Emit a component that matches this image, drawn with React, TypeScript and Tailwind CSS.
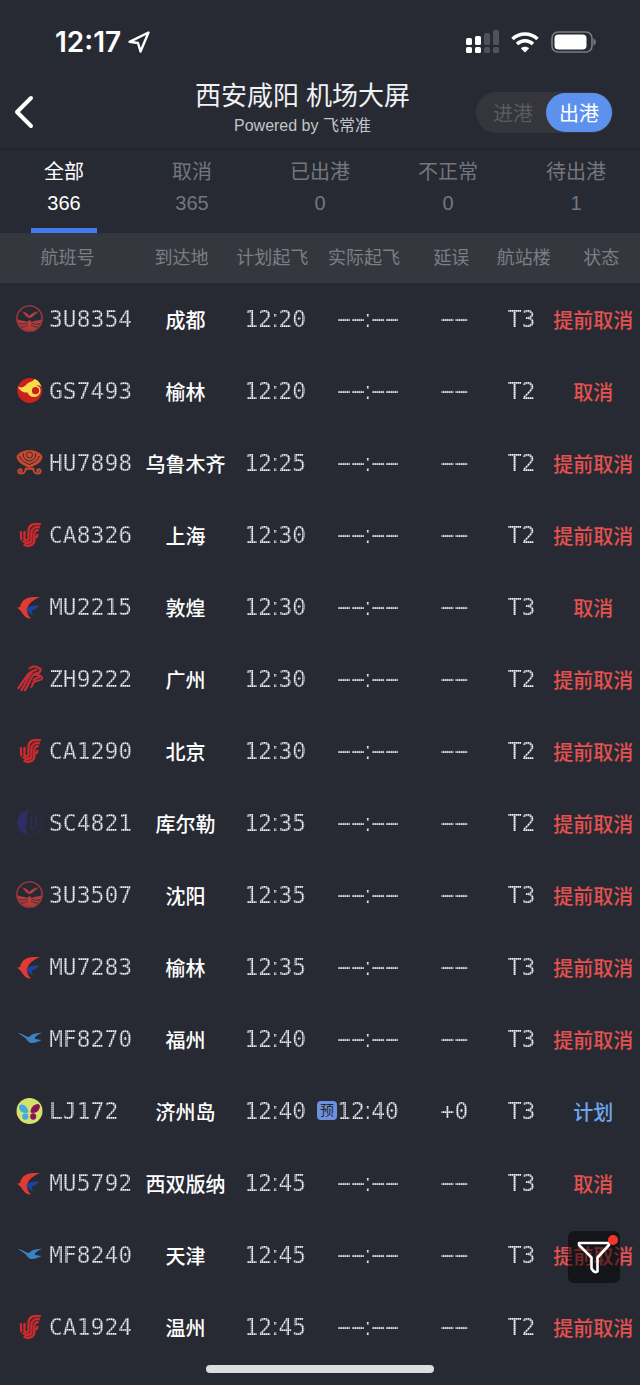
import { useState } from 'react';
import type { ReactNode } from 'react';

type Airline = '3U' | 'GS' | 'HU' | 'CA' | 'MU' | 'ZH' | 'SC' | 'MF' | 'LJ';

interface Flight {
  airline: Airline;
  number: string;
  city: string;
  planned: string;
  actual?: string;
  delay?: string;
  terminal: string;
  status: string;
}

const flights: Flight[] = [
  { airline: '3U', number: '3U8354', city: '成都', planned: '12:20', terminal: 'T3', status: '提前取消' },
  { airline: 'GS', number: 'GS7493', city: '榆林', planned: '12:20', terminal: 'T2', status: '取消' },
  { airline: 'HU', number: 'HU7898', city: '乌鲁木齐', planned: '12:25', terminal: 'T2', status: '提前取消' },
  { airline: 'CA', number: 'CA8326', city: '上海', planned: '12:30', terminal: 'T2', status: '提前取消' },
  { airline: 'MU', number: 'MU2215', city: '敦煌', planned: '12:30', terminal: 'T3', status: '取消' },
  { airline: 'ZH', number: 'ZH9222', city: '广州', planned: '12:30', terminal: 'T2', status: '提前取消' },
  { airline: 'CA', number: 'CA1290', city: '北京', planned: '12:30', terminal: 'T2', status: '提前取消' },
  { airline: 'SC', number: 'SC4821', city: '库尔勒', planned: '12:35', terminal: 'T2', status: '提前取消' },
  { airline: '3U', number: '3U3507', city: '沈阳', planned: '12:35', terminal: 'T3', status: '提前取消' },
  { airline: 'MU', number: 'MU7283', city: '榆林', planned: '12:35', terminal: 'T3', status: '提前取消' },
  { airline: 'MF', number: 'MF8270', city: '福州', planned: '12:40', terminal: 'T3', status: '提前取消' },
  { airline: 'LJ', number: 'LJ172', city: '济州岛', planned: '12:40', actual: '12:40', delay: '+0', terminal: 'T3', status: '计划' },
  { airline: 'MU', number: 'MU5792', city: '西双版纳', planned: '12:45', terminal: 'T3', status: '取消' },
  { airline: 'MF', number: 'MF8240', city: '天津', planned: '12:45', terminal: 'T3', status: '提前取消' },
  { airline: 'CA', number: 'CA1924', city: '温州', planned: '12:45', terminal: 'T2', status: '提前取消' },
];

const tabs = [
  { label: '全部', count: 366 },
  { label: '取消', count: 365 },
  { label: '已出港', count: 0 },
  { label: '不正常', count: 0 },
  { label: '待出港', count: 1 },
];

const columns = [
  { label: '航班号', col: 'w-[22%]', th: 'pr-1.5' },
  { label: '到达地', col: 'w-[14%]', th: 'pr-2' },
  { label: '计划起飞', col: 'w-[14%]', th: 'pr-1.5' },
  { label: '实际起飞', col: 'w-[15%]', th: 'pr-2' },
  { label: '延误', col: 'w-[12%]', th: 'pr-1.5' },
  { label: '航站楼', col: 'w-[9%]', th: 'pl-1' },
  { label: '状态', col: 'w-[14%]', th: 'pl-3' },
];

const logos: Record<Airline, ReactNode> = {
  '3U': (
    <>
      <circle cx="13.5" cy="13.500" r="12.600" fill="none" stroke="#a83a3a" strokeWidth="1.400" />
      <path d="M6 6.500C9.500 7 12 8.500 13.300 11C15 8.500 18 7 22.500 6.500C19.500 9 17.500 12 13.800 13.200C10 12.500 9 9.500 6 6.500Z" fill="#b33c3c" />
      <path d="M1.500 14C5 16.500 8 15 11 17L13.500 15L16 17C19 15 22 16.500 25.500 14C25.200 20 20 25.500 13.500 25.500C7 25.500 1.800 20 1.500 14Z" fill="#b33c3c" />
      <path d="M2.500 18.500Q8 20 11.500 18.300M5 22Q9 22.500 12 20M24.500 18.500Q19 20 15.500 18.300M22 22Q18 22.500 15 20" fill="none" stroke="#272a33" strokeWidth="0.700" />
    </>
  ),
  GS: (
    <>
      <circle cx="13.700" cy="13.500" r="12.400" fill="#c9211e" />
      <path d="M1.800 9.500C5 11.300 8 10.300 10.500 7.500C13 4.500 17 5 18.500 2C22 3 24.500 6.500 25.500 10C24 8.500 22.500 8 20 8C22.500 8.500 24.500 10.500 24.500 13.500C24.500 17.500 21.500 20 18 20C14.500 20 12.500 18 11.500 15.500C7.500 16 3.500 13.500 1.800 9.500Z" fill="#f9dc4a" />
      <circle cx="19.500" cy="13.700" r="3.600" fill="#c9211e" />
    </>
  ),
  HU: (
    <>
      <path d="M13.500 1C19 1 25.500 4 26.500 7.500C26 13.500 20 16 13.500 19C7 16 1 13.500 .5 7.500C1.500 4 8 1 13.500 1Z" fill="#c8492e" />
      <path d="M3.800 7C5 12 9 13.500 13.500 15.500C18 13.500 22 12 23.200 7" fill="none" stroke="#272a33" strokeWidth="1" />
      <path d="M7.500 4.500C6.500 9 10 11.500 13.500 12.200C17 11.500 20.500 9 19.500 4.500" fill="none" stroke="#272a33" strokeWidth="1" />
      <circle cx="13.500" cy="6" r="3" fill="#c8492e" stroke="#272a33" strokeWidth="0.800" />
      <path d="M10 19.500C9.500 23.500 7 25 4.500 24.500C1.500 23.800 1.800 20 4.500 20.300C6 20.500 6 22 5.200 22.300M17 19.500C17.500 23.500 20 25 22.500 24.500C25.500 23.800 25.200 20 22.500 20.300C21 20.500 21 22 21.800 22.300M9.500 19.700H17.500" fill="none" stroke="#c8492e" strokeWidth="2" strokeLinecap="round" />
    </>
  ),
  CA: (
    <g fill="none" stroke="#cf2a2c" strokeLinecap="round">
      <path d="M24 3.200C17 2.200 13 4 12.500 9.500V17.500C12 20 9 20 8.500 17.500V11" strokeWidth="2.400" />
      <path d="M23 6.300C18 5.800 15.800 7.500 15.500 11V19C15 22.500 9.500 23 7.500 20.500" strokeWidth="2.300" />
      <path d="M22 9.300C19.500 9 18.500 10.500 18.300 12.500V20C17.500 24.500 12 26 8.500 24" strokeWidth="2.300" />
      <path d="M4.800 11C5.500 13 4.500 16 5.500 18.500M18.500 16.500C20.500 17 22 15 21.200 13.500" strokeWidth="2.200" />
    </g>
  ),
  MU: (
    <>
      <path d="M24 4C17 4 11 3.800 6.800 8C5 10 5 11.800 4.200 13.200C3.300 14.600 1.800 14.700 .8 14.700C3.200 16 4.500 17.500 6.500 20.500C8.500 23.800 11.500 25.800 15 25.500C11.800 22.500 10.200 18.500 11.800 14C13.500 9.500 18 6.800 24 4Z" fill="#e03a32" />
      <path d="M23.500 12.300C18.500 12 14 13 10.500 15.500C11 18.500 13 21 17 22C16 20.200 15.800 18.800 16 17.600C18.500 17 21 15 23.500 12.300Z" fill="#1f4299" />
    </>
  ),
  ZH: (
    <g fill="none" stroke="#c62d35" strokeLinecap="round">
      <path d="M13.500 3.500C16 .8 20 .8 24.300 3.800C25.500 6.500 22 8.500 18.500 9" strokeWidth="2.300" />
      <path d="M20.500 4.700C14 6.500 11.500 9 9.500 13L2.500 23M15.500 8C12 11.500 11 16.500 5.500 25M18.500 9C14 13 13.500 18.500 9 25" strokeWidth="2.300" />
      <path d="M19.500 10C25 9.500 27 12 25.500 14.500C23 16 18 15 16 19M17.500 15C19.500 13 22 12.500 23.500 12M15 22C16.500 21 17.200 19.500 17.300 18.500" strokeWidth="1.900" />
    </g>
  ),
  SC: (
    <>
      <circle cx="13.500" cy="13.500" r="12.500" fill="none" stroke="#2d2c52" strokeWidth="1.200" />
      <path d="M12.500 1.500C6 2.500 1.800 7 1.500 13.500C1.800 19.500 7 25 12.500 25.500C8.500 19.500 9.500 16 11.500 13C10.500 8.500 11 4.500 12.500 1.500Z" fill="#302c66" />
      <path d="M15.500 7L14.500 19.500H19.500M20 5V17.500" fill="none" stroke="#2e2d56" strokeWidth="1.500" />
    </>
  ),
  MF: (
    <path d="M1.500 8C5.500 8.500 8.500 10.500 11.500 11.800C13 12.300 13.800 11.500 14.500 10.500C17 8.500 21 8 26 7.800C22.500 9.200 19.800 11 18.500 13.500C20.500 14.100 23 15 25.800 14.800C23 17 18.500 18.300 15 18C12.500 17.800 11.500 15.100 9.500 13.300C7.500 11.500 4.500 9.700 1.500 8Z" fill="#3a82c2" />
  ),
  LJ: (
    <>
      <circle cx="13.500" cy="14" r="13" fill="#d5e16d" />
      <path d="M12.500 15.500C12 10.500 8.500 7 5 7.500C2 8.500 3 12 4.500 14C6.500 16 9.500 16.500 12.500 15.500Z" fill="#43a9df" />
      <ellipse cx="9.300" cy="19.500" rx="3.100" ry="3.300" fill="#43a9df" />
      <path d="M14.500 15.500C14.500 10.500 18 7 22 7C24.800 7.800 24 11 22.500 13.200C20.500 15.800 17.500 16.500 14.500 15.500Z" fill="#8a1455" />
      <ellipse cx="17.200" cy="19.500" rx="3" ry="3.200" fill="#8a1455" />
    </>
  ),
};

function AirlineLogo({ airline }: { airline: Airline }) {
  return (
    <svg viewBox="0 0 28 28" className="h-7 w-7 shrink-0" aria-hidden="true">
      {logos[airline]}
    </svg>
  );
}

// board digits; the colon is set in a proportional face so it stays narrow
function Led({ text }: { text: string }) {
  const parts = text.split(':');
  return (
    <span className="bg-[linear-gradient(90deg,transparent_50%,#272a3366_50%),linear-gradient(#f4f5f7_50%,#c4c6cb_50%)] bg-[length:2px_2px] bg-clip-text font-['DejaVu_Sans_Mono',monospace] text-[23px] leading-7 text-transparent">
      {parts[0]}
      {parts.length > 1 && <span className="font-['Liberation_Sans',sans-serif]">:</span>}
      {parts[1]}
    </span>
  );
}

function StatusBar() {
  return (
    <div className="flex h-19 items-center justify-between pt-2 pr-11 pl-[55px]">
      <div className="flex items-center gap-1.5">
        <span className="font-['Inter',sans-serif] text-[28px] font-semibold">12:17</span>
        <svg viewBox="0 0 24 24" className="h-6 w-6" fill="none" stroke="white" strokeWidth="2.400" strokeLinejoin="round" aria-hidden="true">
          <path d="M21.500 2.500L2.500 11.800L11 13L13.500 21.500Z" />
        </svg>
      </div>
      <div className="flex items-center gap-3">
        <svg viewBox="0 0 33 24" className="h-6 w-[33px]" fill="white" aria-hidden="true">
          <rect x="0" y="8" width="6" height="7" rx="1.500" />
          <rect x="9" y="6" width="6" height="9" rx="1.500" />
          <rect x="0" y="17" width="6" height="6" rx="1.500" />
          <rect x="9" y="17" width="6" height="6" rx="1.500" />
          <g fill="#50525a">
            <rect x="18" y="3" width="6" height="12" rx="1.500" />
            <rect x="27" y="0" width="6" height="15" rx="1.500" />
            <rect x="18" y="17" width="6" height="6" rx="1.500" />
            <rect x="27" y="17" width="6" height="6" rx="1.500" />
          </g>
        </svg>
        <svg viewBox="0 0 28 22" className="h-[22px] w-7" fill="none" stroke="white" strokeWidth="3.600" aria-hidden="true">
          <path d="M1.500 8C8.500 1.300 19.500 1.300 26.500 8" />
          <path d="M6 13C10.800 8.600 17.200 8.600 22 13" />
          <path d="M14 21.500L9.800 17.200C12.300 15.200 15.700 15.200 18.200 17.200Z" fill="white" stroke="none" />
        </svg>
        <svg viewBox="0 0 45 22" className="h-[22px] w-[45px]" aria-hidden="true">
          <rect x="1" y="1" width="40" height="20" rx="6" fill="none" stroke="#7b7d84" strokeWidth="1.600" />
          <rect x="3.500" y="3.500" width="32" height="15" rx="4" fill="white" />
          <path d="M42.500 7.500C45.500 8.500 45.500 13.500 42.500 14.500Z" fill="#7b7d84" />
        </svg>
      </div>
    </div>
  );
}

function DirectionToggle() {
  const [direction, setDirection] = useState('出港');
  return (
    <div className="flex h-[41px] rounded-full bg-[#35363c] p-px pl-1">
      {['进港', '出港'].map((item) => (
        <button
          key={item}
          type="button"
          aria-pressed={item === direction}
          onClick={() => setDirection(item)}
          className={
            item === direction
              ? 'w-[66px] rounded-full bg-[#5c92ee] pt-1 text-xl text-white'
              : 'w-[66px] rounded-full pt-1 text-xl text-[#5a5b60]'
          }
        >
          {item}
        </button>
      ))}
    </div>
  );
}

function Header() {
  return (
    <header className="grid h-[74px] grid-cols-[1fr_auto_1fr] items-center border-b-2 border-[#22252d] pr-[27px] pl-3">
      <button type="button" aria-label="返回" className="w-6">
        <svg viewBox="0 0 24 34" className="h-[34px] w-6" fill="none" stroke="white" strokeWidth="4" strokeLinecap="round" strokeLinejoin="round" aria-hidden="true">
          <path d="M19 3L5 17L19 31" />
        </svg>
      </button>
      <div className="pr-5 pb-2 text-center">
        <h1 className="text-[26px] leading-9 text-[#f1f2f4]">西安咸阳 机场大屏</h1>
        <p className="text-base leading-6 text-[#c3c4c9]">Powered by 飞常准</p>
      </div>
      <div className="flex justify-end">
        <DirectionToggle />
      </div>
    </header>
  );
}

function Tabs() {
  const [active, setActive] = useState('全部');
  return (
    <nav className="grid grid-cols-5">
      {tabs.map(({ label, count }) => (
        <button
          key={label}
          type="button"
          onClick={() => setActive(label)}
          className={
            label === active
              ? 'flex flex-col items-center pt-1.5 text-xl text-white'
              : 'flex flex-col items-center pt-1.5 text-xl text-[#74767d]'
          }
        >
          <span className="leading-8">{label}</span>
          <span className="leading-[30px]">{count}</span>
          <span className={label === active ? 'mt-2.5 h-[5px] w-[66px] bg-[#3f7bec]' : 'mt-2.5 h-[5px]'} />
        </button>
      ))}
    </nav>
  );
}

function FlightRow({ flight }: { flight: Flight }) {
  return (
    <tr className="h-18">
      <td>
        <div className="flex items-center gap-[5px] pl-4">
          <AirlineLogo airline={flight.airline} />
          <Led text={flight.number} />
        </div>
      </td>
      <td className="pt-1 text-xl font-medium">{flight.city}</td>
      <td><Led text={flight.planned} /></td>
      <td>
        <div className="relative inline-block">
          {flight.actual && (
            <span className="absolute top-1 right-full flex h-[19px] w-5 items-center justify-center rounded-sm bg-[#6f8fe0] text-sm text-[#272a33]">预</span>
          )}
          <Led text={flight.actual ?? '−−:−−'} />
        </div>
      </td>
      <td><Led text={flight.delay ?? '−−'} /></td>
      <td><Led text={flight.terminal} /></td>
      <td className={flight.status === '计划' ? 'pt-1 pr-1 text-xl font-medium text-[#6ea6ee]' : 'pt-1 pr-1 text-xl font-medium text-[#e4514f]'}>
        {flight.status}
      </td>
    </tr>
  );
}

export default function App() {
  return (
    <div className="min-h-screen bg-[#272a33] font-['Liberation_Sans','Noto_Sans_CJK_SC',sans-serif] text-white">
      <StatusBar />
      <Header />
      <Tabs />
      <table className="w-full table-fixed whitespace-nowrap text-center">
        <colgroup>
          {columns.map(({ label, col }) => <col key={label} className={col} />)}
        </colgroup>
        <thead>
          <tr className="h-[50px] bg-[#35373f] text-lg text-[#7c7e85]">
            {columns.map(({ label, th }) => (
              <th key={label} scope="col" className={th}><span className="font-normal">{label}</span></th>
            ))}
          </tr>
        </thead>
        <tbody>
          {flights.map((flight) => <FlightRow key={flight.number} flight={flight} />)}
        </tbody>
      </table>
      <button type="button" aria-label="筛选" className="fixed right-5 bottom-[102px] flex h-[52px] w-[52px] items-center justify-center rounded-md bg-black/50">
        <svg viewBox="0 0 34 34" className="h-[34px] w-[34px]" fill="none" stroke="white" strokeWidth="2.600" strokeLinejoin="round" aria-hidden="true">
          <path d="M2 3H32V5L20.500 17.500V31.500Q17.500 33.500 14.500 28.500V17.500L2 5Z" />
        </svg>
        <span className="absolute top-1 right-0.5 h-2.5 w-2.5 rounded-full bg-[#f5352b]" />
      </button>
      <div className="fixed bottom-3 left-1/2 h-2 w-[228px] -translate-x-1/2 rounded-full bg-[#dcdddc]" />
    </div>
  );
}
